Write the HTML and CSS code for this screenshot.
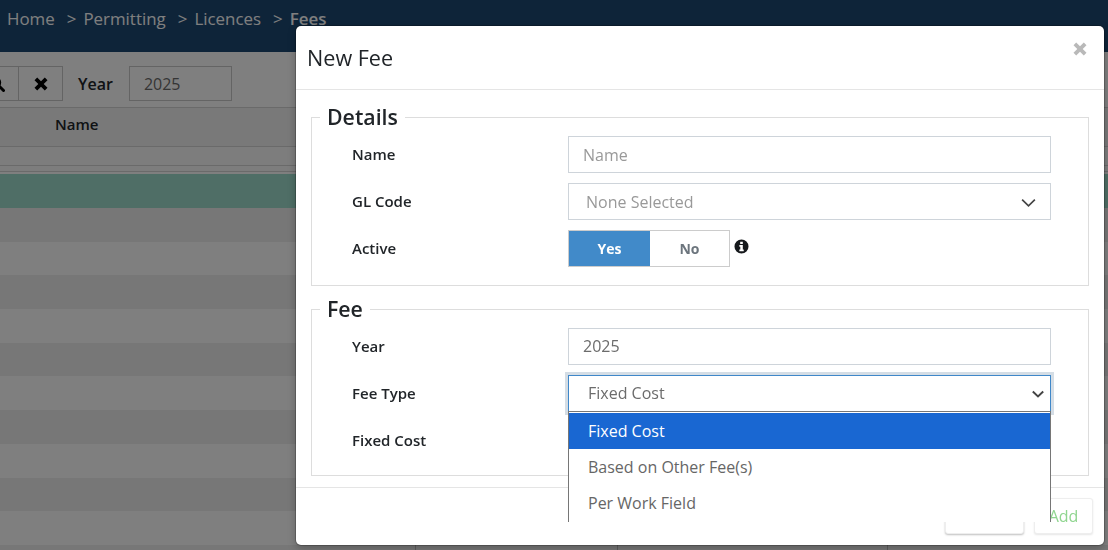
FILE: index.html
```html
<!DOCTYPE html>
<html lang="en">
<head>
<meta charset="utf-8">
<title>New Fee</title>
<link rel="stylesheet" href="styles.css">
</head>
<body>
<div class="page">
  <header class="topbar">
    <nav class="crumbs">
      <span>Home</span><span class="sep">&gt;</span><span>Permitting</span><span class="sep">&gt;</span><span>Licences</span><span class="sep">&gt;</span><span class="current">Fees</span>
    </nav>
  </header>
  <main class="content">
    <div class="toolbar">
      <div class="btn-group">
        <button class="tool-btn search-btn" type="button">
          <svg class="tool-icon" viewBox="0 0 16 16"><circle cx="6.5" cy="6.5" r="4.5" fill="none" stroke="#000" stroke-width="2.4"/><path d="M10 10l4.500 4.500" stroke="#000" stroke-width="3" stroke-linecap="round"/></svg>
        </button>
        <button class="tool-btn clear-btn" type="button">
          <svg class="tool-icon" viewBox="0 0 16 16"><path d="M1.500 4.200 4.200 1.500 8 5.300l3.800-3.800 2.700 2.700L10.700 8l3.800 3.800-2.700 2.700L8 10.700l-3.800 3.800-2.700-2.700L5.300 8z" fill="#000"/></svg>
        </button>
      </div>
      <span class="year-label">Year</span>
      <div class="year-box">2025</div>
    </div>
    <div class="thead"><span class="th-name">Name</span></div>
    <div class="filter-row"></div>
    <div class="thin-row"></div>
    <div class="row selected"></div>
    <div class="row alt"></div>
    <div class="row"></div>
    <div class="row alt"></div>
    <div class="row"></div>
    <div class="row alt"></div>
    <div class="row"></div>
    <div class="row alt"></div>
    <div class="row"></div>
    <div class="row alt"></div>
    <div class="row"></div>
    <div class="row alt cells"><i class="cell-a"></i><i class="cell-b"></i><i class="cell-c"></i></div>
  </main>
</div>
<div class="backdrop"></div>

<section class="modal">
  <div class="modal-head">
    <h2 class="modal-title">New Fee</h2>
    <svg class="close-icon" viewBox="0 0 16 16"><path d="M1.500 4.200 4.200 1.500 8 5.300l3.800-3.800 2.700 2.700L10.700 8l3.800 3.800-2.700 2.700L8 10.700l-3.800 3.800-2.700-2.700L5.300 8z" fill="#b9b9b9"/></svg>
  </div>
  <div class="modal-body">
    <fieldset class="group details">
      <legend>Details</legend>
      <div class="field">
        <label>Name</label>
        <div class="control placeholder pad-input">Name</div>
      </div>
      <div class="field">
        <label>GL Code</label>
        <div class="control placeholder pad-select">None Selected
          <svg class="chevron" viewBox="0 0 16 10"><path d="M1.200 1.500 8 8l6.800-6.500" fill="none" stroke="#444" stroke-width="1.800"/></svg>
        </div>
      </div>
      <div class="field">
        <label>Active</label>
        <div class="toggle">
          <span class="toggle-yes">Yes</span>
          <span class="toggle-no">No</span>
        </div>
        <svg class="info-icon" viewBox="0 0 16 16"><path fill-rule="evenodd" d="M8 .500a7.500 7.500 0 1 0 0 15 7.500 7.500 0 0 0 0-15zM6.600 3h2.800v2.200H6.600zM5.700 6.500h3.700v4.800h1v1.700H5.700v-1.700h1V8.200h-1z" fill="#16191c"/></svg>
      </div>
    </fieldset>
    <fieldset class="group fee">
      <legend>Fee</legend>
      <div class="field">
        <label>Year</label>
        <div class="control value pad-input">2025</div>
      </div>
      <div class="field">
        <label>Fee Type</label>
        <div class="control value focused pad-native">Fixed Cost
          <svg class="chevron small" viewBox="0 0 16 10"><path d="M1.500 1.800 8 8l6.500-6.200" fill="none" stroke="#444" stroke-width="2.400"/></svg>
        </div>
      </div>
      <div class="field">
        <label>Fixed Cost</label>
      </div>
    </fieldset>
  </div>
  <div class="modal-foot">
    <button class="foot-btn cancel" type="button">Cancel</button>
    <button class="foot-btn add" type="button">Add</button>
  </div>
  <ul class="options">
    <li class="active">Fixed Cost</li>
    <li>Based on Other Fee(s)</li>
    <li>Per Work Field</li>
  </ul>
</section>
</body>
</html>
```
FILE: styles.css
```css
* { box-sizing: border-box; }
html, body { margin: 0; height: 100%; overflow: hidden; }
body { font-family: "Open Sans", sans-serif; color: #212529; background: #fff; }
.page { height: 550px; display: flex; flex-direction: column; overflow: hidden; }
.topbar { height: 52px; background: #1c4872; padding: 8px 7px 0; flex: none; }
.crumbs { display: flex; font-size: 16.9px; line-height: 22px; color: #fff; }
.sep { margin: 0 7px 0 12px; }
.current { font-weight: 600; }
.content { flex: 1; display: flex; flex-direction: column; background: #fff; }
.toolbar { height: 56px; flex: none; display: flex; align-items: flex-start; padding-top: 14px; border-bottom: 1px solid #d4d4d4; }
.btn-group { display: flex; margin-left: -26px; }
.tool-btn { width: 45px; height: 35px; background: #fff; border: 1px solid #c8c8c8; display: flex; align-items: center; justify-content: center; padding: 0; }
.clear-btn { margin-left: -1px; }
.tool-icon { width: 16px; height: 16px; }
.year-label { margin-left: 15px; font-size: 16px; font-weight: 600; line-height: 37px; }
.year-box { margin-left: 16px; width: 103px; height: 35px; border: 1px solid #c8c8c8; padding-left: 14px; font-size: 16px; line-height: 35px; color: #6b6b6b; }
.thead { height: 39px; flex: none; border-bottom: 1px solid #d4d4d4; background: #f3f3f3; padding-left: 55px; }
.th-name { font-size: 15px; font-weight: 600; line-height: 32px; }
.filter-row { height: 19px; flex: none; border-bottom: 1px solid #d4d4d4; background: #fbfbfb; }
.thin-row { height: 6px; margin-bottom: 2px; flex: none; background: #fbfbfb; border-bottom: 1px solid #d4d4d4; }
.row { height: 33.7px; flex: none; background: #fff; }
.row.alt { background: #efefef; }
.row.selected { height: 34px; background: #9edccc; }
.cells { display: flex; padding-left: 415px; }
.cells i { border-left: 1px solid #bbb; }
.cell-a { width: 202px; }
.cell-b { width: 270px; }
.cell-c { width: 1px; }
.backdrop { position: fixed; inset: 0; background: rgba(0, 0, 0, .5); }

.modal { position: absolute; left: 296px; top: 26px; width: 808px; height: 519px; background: #fff; border-radius: 5px; box-shadow: 0 0 0 1px rgba(0, 0, 0, .2), 0 3px 9px rgba(0, 0, 0, .25); display: flex; flex-direction: column; }
.modal-head { height: 64px; flex: none; border-bottom: 1px solid #e5e5e5; display: flex; justify-content: space-between; padding: 16px 16px 0 11px; }
.modal-title { margin: 0; font-size: 21.6px; font-weight: 400; line-height: 32px; }
.close-icon { width: 16px; height: 16px; margin-top: -1px; }
.modal-body { flex: 1; min-height: 0; padding: 16px 15px 0; display: flex; flex-direction: column; gap: 8px; }
.group { margin: 0; padding: 4px 37px 0 40px; border: 1px solid #ddd; display: flex; flex-direction: column; gap: 10px; min-width: 0; flex: none; }
.details { height: 184px; margin-top: -4px; }
.fee { height: 182px; }
.group legend { margin-left: -32px; padding: 0 7px; font-size: 21.3px; font-weight: 600; line-height: 30px; width: auto; }
.field { display: flex; align-items: flex-start; height: 37px; }
.field label { width: 216px; flex: none; font-size: 15px; font-weight: 600; line-height: 36px; }
.control { position: relative; width: 483px; height: 37px; border: 1px solid #ced4da; font-size: 16px; line-height: 35px; }
.placeholder { color: #999; line-height: 37px; }
.value { color: #6c6c6c; }
.pad-input { padding-left: 14px; }
.pad-select { padding-left: 17px; }
.pad-native { padding-left: 19px; }
.focused { border-color: #3f87c9; box-shadow: 0 0 0 3px #d4dde5; }
.chevron { position: absolute; right: 14px; top: 14px; width: 15px; height: 10px; }
.chevron.small { right: 5px; top: 14px; width: 14px; height: 8px; }
.toggle { display: flex; width: 162px; height: 37px; border: 1px solid #ccc; font-size: 14px; font-weight: 700; line-height: 35px; text-align: center; }
.toggle-yes { width: 81px; background: #418ac9; color: #fff; }
.toggle-no { flex: 1; color: #6c757d; }
.info-icon { width: 15px; height: 15px; margin: 9px 0 0 4px; }
.modal-foot { height: 58px; flex: none; border-top: 1px solid #e5e5e5; display: flex; justify-content: flex-end; gap: 10px; padding: 10px 11px 0 0; }
.foot-btn { height: 36px; background: #fff; border: 1px solid #eee; border-radius: 3px; box-shadow: 0 1px 2px rgba(0, 0, 0, .25); font: 400 16px "Open Sans", sans-serif; }
.cancel { width: 79px; color: #777; }
.add { width: 59px; color: #8fd58f; box-shadow: 0 1px 2px rgba(0, 0, 0, .1); }
.options { position: absolute; left: 272px; top: 385px; width: 483px; height: 111px; margin: 0; padding: 1px 0 0; list-style: none; background: #fff; border: 1px solid #767676; border-bottom: 0; font-size: 16px; color: #666; }
.options li { height: 36px; line-height: 36px; padding-left: 19px; }
.options .active { background: #1967d2; color: #fff; }
```
